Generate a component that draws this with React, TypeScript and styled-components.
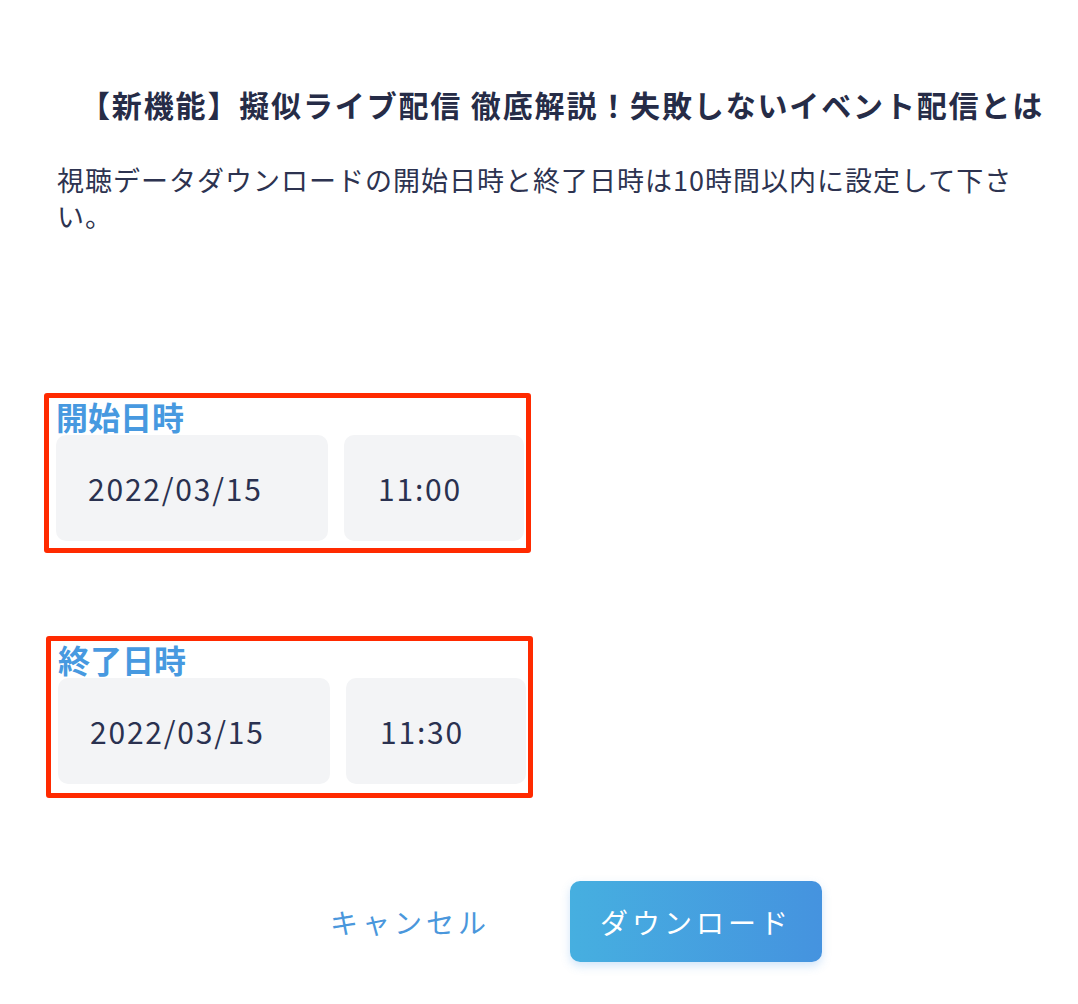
import React from "react";
import styled, { createGlobalStyle } from "styled-components";

const Global = createGlobalStyle`
  html, body { margin: 0; padding: 0; background: #ffffff; }
  body { font-family: "Noto Sans CJK JP", "Noto Sans", sans-serif; }
`;

const Page = styled.div`
  width: 1078px;
  height: 1004px;
  box-sizing: border-box;
  padding: 80px 44px 0 57px;
  display: flex;
  flex-direction: column;
`;

const Title = styled.h1`
  margin: 0;
  padding-left: 23px;
  font-size: 30px;
  line-height: 48px;
  font-weight: 700;
  letter-spacing: 1.85px;
  color: #262c47;
  white-space: nowrap;
`;

const Lead = styled.p`
  margin: 34px 0 0;
  font-size: 27px;
  line-height: 36px;
  font-weight: 400;
  letter-spacing: 1px;
  color: #2d3350;
`;

const Annotated = styled.section<{ $shift: number; $top: number; $bottom: number }>`
  margin-left: ${(p) => p.$shift}px;
  margin-top: ${(p) => p.$top}px;
  width: 487px;
  box-sizing: border-box;
  border: 5px solid #ff2a00;
  border-radius: 3px;
  padding: 0 2px ${(p) => p.$bottom}px 7px;
  display: flex;
  flex-direction: column;
`;

const FieldLabel = styled.div`
  font-size: 32px;
  line-height: 37px;
  font-weight: 700;
  color: #4799e0;
  padding-left: 0;
`;

const FieldRow = styled.div`
  display: flex;
  gap: 16px;
`;

const Field = styled.div<{ $w: number; $pad: number }>`
  width: ${(p) => p.$w}px;
  height: 106px;
  box-sizing: border-box;
  padding-left: ${(p) => p.$pad}px;
  background: #f3f4f6;
  border-radius: 10px;
  display: flex;
  align-items: center;
  font-size: 30px;
  letter-spacing: 1.8px;
  color: #2a3150;
`;

const Footer = styled.div`
  margin-top: 83px;
  display: flex;
  align-items: center;
  padding-left: 227px;
  gap: 34px;
`;

const CancelButton = styled.button`
  width: 252px;
  height: 80px;
  border: none;
  background: transparent;
  font-family: inherit;
  font-size: 28px;
  letter-spacing: 4px;
  color: #4a97dc;
  cursor: pointer;
  padding: 0;
`;

const PrimaryButton = styled.button`
  width: 252px;
  height: 81px;
  border: none;
  border-radius: 10px;
  background: linear-gradient(90deg, #46afe0 0%, #4593df 100%);
  box-shadow: 0 4px 10px rgba(70, 150, 230, 0.25);
  font-family: inherit;
  font-size: 28px;
  letter-spacing: 4px;
  color: #ffffff;
  cursor: pointer;
  padding: 0;
`;

type Range = { label: string; date: string; time: string; shift: number; top: number; bottom: number };

const ranges: Range[] = [
  { label: "開始日時", date: "2022/03/15", time: "11:00", shift: -13, top: 159, bottom: 7 },
  { label: "終了日時", date: "2022/03/15", time: "11:30", shift: -11, top: 83, bottom: 9 },
];

export default function App() {
  return (
    <>
      <Global />
      <Page>
        <Title>【新機能】擬似ライブ配信 徹底解説！失敗しないイベント配信とは</Title>
        <Lead>視聴データダウンロードの開始日時と終了日時は10時間以内に設定して下さい。</Lead>
        {ranges.map((r) => (
          <Annotated key={r.label} $shift={r.shift} $top={r.top} $bottom={r.bottom}>
            <FieldLabel>{r.label}</FieldLabel>
            <FieldRow>
              <Field $w={272} $pad={32}>{r.date}</Field>
              <Field $w={180} $pad={34}>{r.time}</Field>
            </FieldRow>
          </Annotated>
        ))}
        <Footer>
          <CancelButton>キャンセル</CancelButton>
          <PrimaryButton>ダウンロード</PrimaryButton>
        </Footer>
      </Page>
    </>
  );
}
